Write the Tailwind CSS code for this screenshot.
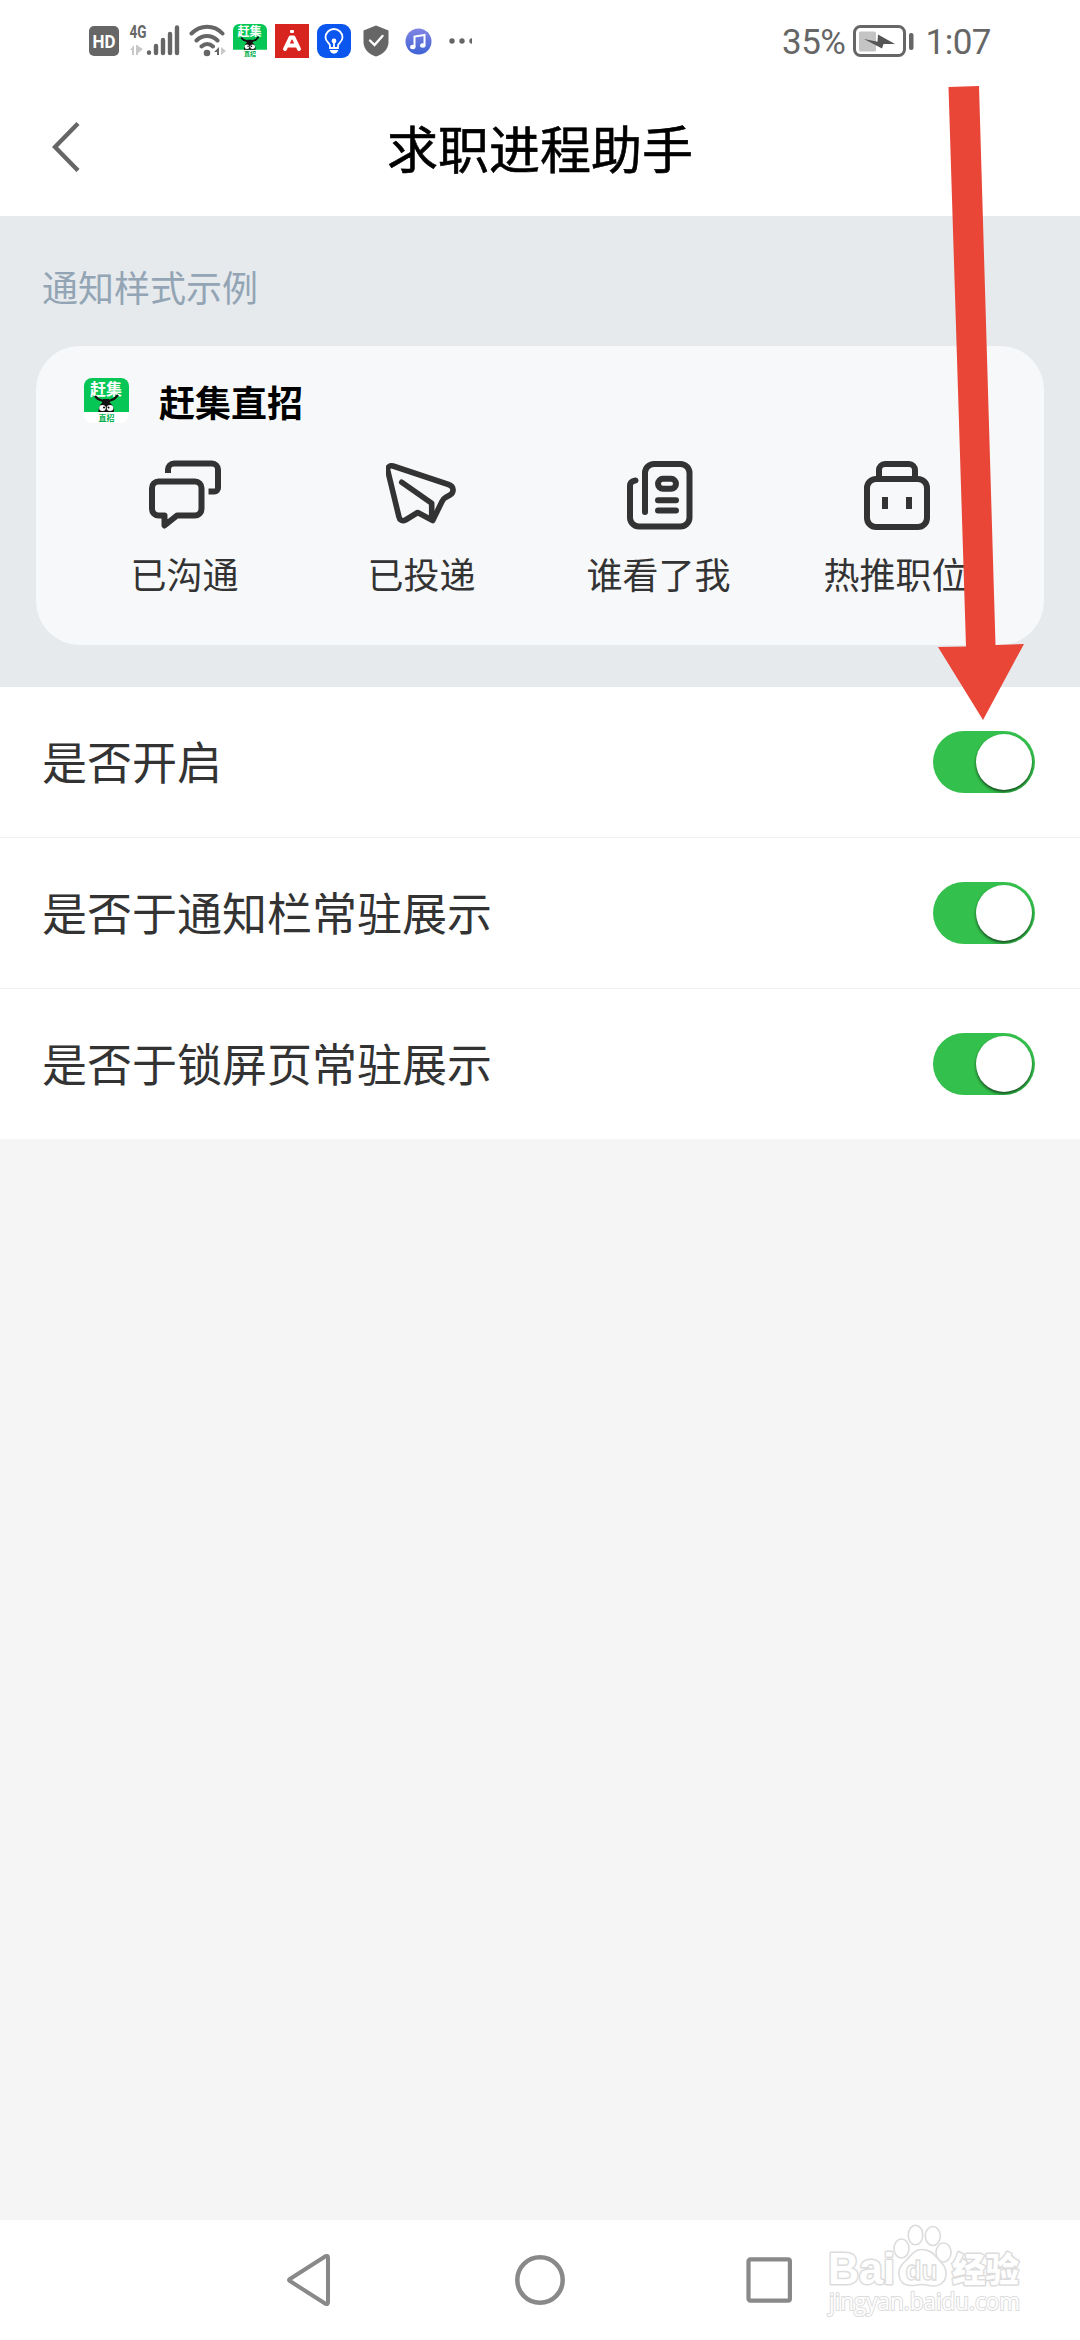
<!DOCTYPE html>
<html lang="zh-CN">
<head>
  <meta charset="UTF-8" />
  <meta name="viewport" content="width=device-width, initial-scale=1.0" />
  <title>求职进程助手</title>
  <script src="https://cdn.jsdelivr.net/npm/@tailwindcss/browser@4"></script>
</head>
<body class="bg-[#f5f5f5] font-['Noto_Sans_CJK_SC',sans-serif]">
  <div class="relative flex flex-col w-[1080px] h-[2340px] overflow-hidden">

    <!-- Status bar -->
    <div class="flex items-center justify-between h-[82px] bg-white pl-[89px] pr-[89px] text-[#666]">
      <div class="flex items-center">
        <svg class="w-[30px] h-[30px]" viewBox="0 0 30 30">
          <rect width="30" height="30" rx="5" fill="#666" />
          <text x="3.5" y="22" font-family="Roboto" font-weight="700" font-size="19" textLength="23" lengthAdjust="spacingAndGlyphs" fill="#fff">HD</text>
        </svg>
        <svg class="w-[51px] h-[34px] ml-[10px] overflow-visible" viewBox="0 0 51 34">
          <text x="0.5" y="14" font-family="Roboto" font-weight="700" font-size="18" textLength="17" lengthAdjust="spacingAndGlyphs" fill="#666">4G</text>
          <path d="M5 21v10H3v-5H1zM7 21v10h2v-2l5-4-5-3v-1z" fill="#c8c8c8" />
          <path d="M20 28.5v.2M27 22v7M34 16v13M41 10v19M48 3.500v25.500" stroke="#666" stroke-width="4.400" stroke-linecap="round" />
        </svg>
        <svg class="w-[38px] h-[34px] ml-[9px]" viewBox="0 0 38 34" fill="none" stroke="#666" stroke-width="4" stroke-linecap="round">
          <path d="M2.500 9.500C11.500 .500 25 .500 33.500 9.500M7.500 16.500c6-6 15-6 21 0M12.500 22.500c3.500-3.200 8-3.200 11.500 0" />
          <circle cx="18" cy="29" r="3.300" fill="#666" stroke="none" />
          <path d="M30 23v8h-2v-3h-3z" fill="#666" stroke="none" />
          <path d="M32 23v8l5-4z" fill="#c8c8c8" stroke="none" />
        </svg>
        <svg class="w-[34px] h-[34px] ml-[6px] overflow-visible" viewBox="0 0 45 45">
          <rect width="45" height="45" rx="8" fill="#fff" />
          <path d="M0 34V8a8 8 0 0 1 8-8h29a8 8 0 0 1 8 8v26z" fill="#06c755" />
          <text x="6" y="16.500" font-size="16" font-weight="700" fill="#fff">赶集</text>
          <path d="M11 18l3 3 8 3M34 17l-4 4-8 3" fill="none" stroke="#111" stroke-width="2.400" />
          <path d="M14.500 34c0-5 2-8 3.500-9l1-4h6l1 4c2 1 4 4 4 9z" fill="#111" />
          <ellipse cx="18.500" cy="30" rx="3.300" ry="3" fill="#fff" /><ellipse cx="26" cy="30" rx="3.300" ry="3" fill="#fff" />
          <circle cx="20" cy="29.500" r="1" /><circle cx="24.500" cy="29.500" r="1" />
          <text x="14.500" y="42.500" font-size="8" font-weight="700" fill="#06b050">直招</text>
        </svg>
        <svg class="w-[34px] h-[34px] ml-[8px]" viewBox="0 0 34 34">
          <rect width="34" height="34" fill="#d8241f" />
          <path d="M10 25L15.500 13.500h3L24 25M13 21.500h8" fill="none" stroke="#fff" stroke-width="4" stroke-linecap="round" stroke-linejoin="round" />
          <rect x="15" y="6" width="4" height="3" rx="1" fill="#fff" />
        </svg>
        <svg class="w-[34px] h-[34px] ml-[8px]" viewBox="0 0 34 34" fill="none" stroke="#fff" stroke-width="1.800" stroke-linecap="round">
          <rect width="34" height="34" rx="9" fill="#0a56ee" stroke="none" />
          <path d="M13 24v-2.500c0-2-4.500-4-4.500-8a8.500 8.500 0 0 1 17 0c0 4-4.500 6-4.500 8V24zM17 18v5.500M14 27c1 2.500 5 2.500 6 0z" />
          <circle cx="17" cy="17" r="1.500" fill="#fff" />
        </svg>
        <svg class="w-[26px] h-[32px] ml-[12px]" viewBox="0 0 26 32">
          <path d="M13 .500l12.500 5V17c0 7-5 12-12.500 14.500C5.500 29 .500 24 .500 17V5.500z" fill="#666" />
          <path d="M7 15.500l4.500 4.500 8-9" fill="none" stroke="#fff" stroke-width="2.400" stroke-linecap="round" />
        </svg>
        <svg class="w-[27px] h-[27px] ml-[16px]" viewBox="0 0 27 27">
          <defs>
            <linearGradient id="music" x1="0" y1="0" x2="0" y2="1">
              <stop offset="0" stop-color="#8184e2" />
              <stop offset="1" stop-color="#3f63d6" />
            </linearGradient>
          </defs>
          <circle cx="13.500" cy="13.500" r="13" fill="url(#music)" />
          <path d="M9.500 19V8.500L19.500 7v10.500" fill="none" stroke="#fff" stroke-width="2" />
          <ellipse cx="7.800" cy="19" rx="2.700" ry="2.200" fill="#fff" /><ellipse cx="17.800" cy="17.500" rx="2.700" ry="2.200" fill="#fff" />
        </svg>
        <svg class="w-[23px] h-[6px] ml-[17px]" viewBox="0 0 23 6" fill="#666">
          <circle cx="3" cy="3" r="2.700" /><circle cx="13" cy="3" r="2.700" /><circle cx="23" cy="3" r="2.700" />
        </svg>
      </div>
      <div class="flex items-center font-[Roboto] text-[35px] leading-none">
        <span class="tracking-[-0.5px] pt-[2px]">35%</span>
        <svg class="w-[62px] h-[32px] ml-[6px]" viewBox="0 0 62 32">
          <rect x="2.500" y="1.500" width="50" height="29" rx="6" fill="none" stroke="#666" stroke-width="3" />
          <rect x="7" y="6.500" width="17" height="20" rx="1.500" fill="#c4c4c4" />
          <rect x="57" y="8" width="4.500" height="17" rx="2" fill="#666" />
          <path d="M12 14l13.500 2.700.5-7.200 17 9.500H31.500L30 23.500z" fill="#555" />
        </svg>
        <span class="ml-[12px] tracking-[-0.5px] pt-[2px]">1:07</span>
      </div>
    </div>

    <!-- Title bar -->
    <header class="grid grid-cols-[120px_1fr_120px] items-center h-[134px] bg-white">
      <svg class="w-[28px] h-[50px] ml-[52px] mb-[4px]" viewBox="0 0 28 50">
        <path d="M26 1.500L3 25l23 23.500" fill="none" stroke="#666" stroke-width="4.400" />
      </svg>
      <h1 class="pb-1 text-center text-[51px] leading-none text-black [-webkit-text-stroke:0.6px_#000]">求职进程助手</h1>
    </header>

    <!-- Notification preview -->
    <section class="h-[471px] bg-[#e6eaed] px-9 pt-[52px]">
      <p class="pl-[6px] text-[36px] leading-[36px] text-[#93a5b5]">通知样式示例</p>
      <div class="h-[299px] mt-[42px] rounded-[44px] bg-[#f7f8fa] pt-8 px-[30px]">
        <div class="flex items-center gap-[30px] h-[45px] pl-[18px]">
          <svg class="w-[45px] h-[45px] overflow-visible" viewBox="0 0 45 45">
            <rect width="45" height="45" rx="8" fill="#fff" />
            <path d="M0 34V8a8 8 0 0 1 8-8h29a8 8 0 0 1 8 8v26z" fill="#06c755" />
            <text x="6" y="16.500" font-size="16" font-weight="700" fill="#fff">赶集</text>
            <path d="M11 18l3 3 8 3M34 17l-4 4-8 3" fill="none" stroke="#111" stroke-width="2.400" />
            <path d="M14.500 34c0-5 2-8 3.500-9l1-4h6l1 4c2 1 4 4 4 9z" fill="#111" />
            <ellipse cx="18.500" cy="30" rx="3.300" ry="3" fill="#fff" /><ellipse cx="26" cy="30" rx="3.300" ry="3" fill="#fff" />
            <circle cx="20" cy="29.500" r="1" /><circle cx="24.500" cy="29.500" r="1" />
            <text x="14.500" y="42.500" font-size="8" font-weight="700" fill="#06b050">直招</text>
          </svg>
          <span class="text-[36px] leading-none font-bold text-black">赶集直招</span>
        </div>
        <div class="grid grid-cols-4 mt-9 text-[36px] leading-none text-[#333]">
          <div class="flex flex-col items-center gap-6">
            <svg class="w-[72px] h-[72px]" viewBox="0 0 72 72" fill="none" stroke="#333" stroke-width="6" stroke-linejoin="round">
              <path d="M9.500 22.500H46a6.500 6.500 0 0 1 6.500 6.500V50a6.500 6.500 0 0 1-6.500 6.500H28L15.500 66.500v-10h-6A6.500 6.500 0 0 1 3 50V29a6.500 6.500 0 0 1 6.500-6.500z" />
              <path d="M19 14v-3.500a6 6 0 0 1 6-6H63a6 6 0 0 1 6 6V29a3.500 3.500 0 0 1-3.500 3.500H59.500" />
            </svg>
            <span>已沟通</span>
          </div>
          <div class="flex flex-col items-center gap-6">
            <svg class="w-[72px] h-[72px]" viewBox="0 0 72 72" fill="none" stroke="#333" stroke-width="5.600" stroke-linejoin="round" stroke-linecap="round">
              <path d="M1.700 11.500C1.200 8 4 6 7 7l55.500 18.500c5.500 2 6 7.500 1.500 10.500l-4.500 2.500c-2 1-2.500 2-3.500 4L46.700 61.500 31.700 53.500 19.500 61c-3 1.500-6 0-6.500-3z" />
              <path d="M15.700 23.300L45.700 44.300V59" />
            </svg>
            <span>已投递</span>
          </div>
          <div class="flex flex-col items-center gap-6">
            <svg class="w-[72px] h-[72px]" viewBox="0 0 72 72" fill="none" stroke="#333" stroke-width="6" stroke-linecap="round">
              <path d="M22 53V14a9 9 0 0 1 9-9h26.500a9 9 0 0 1 9 9v44.500a9 9 0 0 1-9 9H16a9 9 0 0 1-9-9V27c0-3 2-5 5.500-5.500" />
              <rect x="35" y="19.800" width="18" height="10" rx="5" />
              <path d="M35 41.300h18M35 51.500h18" />
            </svg>
            <span>谁看了我</span>
          </div>
          <div class="flex flex-col items-center gap-6">
            <svg class="w-[72px] h-[72px]" viewBox="0 0 72 72" fill="none" stroke="#333" stroke-width="6">
              <rect x="7" y="20" width="60" height="48" rx="9" />
              <path d="M19 20v-9a6 6 0 0 1 6-6h24a6 6 0 0 1 6 6v9M25 38v12M49 38v12" />
            </svg>
            <span>热推职位</span>
          </div>
        </div>
      </div>
    </section>

    <!-- Settings -->
    <ul class="bg-white text-[45px] leading-none text-[#333] divide-y divide-[#f1f1f1]">
      <li class="flex items-center justify-between box-content h-[150px] pl-[42px] pr-[45px]">
        <span class="pb-[3px]">是否开启</span>
        <span class="flex justify-end w-[102px] h-[62px] p-[3px] rounded-full bg-[#34c04c] overflow-hidden">
          <span class="size-14 rounded-full bg-white shadow-[0_2px_3px_rgba(0,0,0,0.6)]"></span>
        </span>
      </li>
      <li class="flex items-center justify-between box-content h-[150px] pl-[42px] pr-[45px]">
        <span class="pb-[3px]">是否于通知栏常驻展示</span>
        <span class="flex justify-end w-[102px] h-[62px] p-[3px] rounded-full bg-[#34c04c] overflow-hidden">
          <span class="size-14 rounded-full bg-white shadow-[0_2px_3px_rgba(0,0,0,0.6)]"></span>
        </span>
      </li>
      <li class="flex items-center justify-between box-content h-[150px] pl-[42px] pr-[45px]">
        <span class="pb-[3px]">是否于锁屏页常驻展示</span>
        <span class="flex justify-end w-[102px] h-[62px] p-[3px] rounded-full bg-[#34c04c] overflow-hidden">
          <span class="size-14 rounded-full bg-white shadow-[0_2px_3px_rgba(0,0,0,0.6)]"></span>
        </span>
      </li>
    </ul>

    <!-- System navigation -->
    <nav class="flex items-center justify-between h-[120px] mt-auto bg-white px-[286px]">
      <svg class="w-[48px] h-[54px]" viewBox="0 0 48 54" fill="none" stroke="#898989" stroke-width="4" stroke-linejoin="round">
        <path d="M3.500 26.200L39.500 3.200q2.500-1 2.500 1.500V49.300q0 2.500-2.500 1.500L3.500 27.800q-1-.8 0-1.600z" />
      </svg>
      <svg class="w-[50px] h-[50px]" viewBox="0 0 50 50" fill="none" stroke="#898989" stroke-width="4.500">
        <circle cx="25" cy="25" r="22.700" />
      </svg>
      <svg class="w-[48px] h-[46px]" viewBox="0 0 48 46" fill="none" stroke="#898989" stroke-width="4.200">
        <rect x="2.500" y="2.300" width="41.400" height="41.400" rx="2" />
      </svg>
    </nav>

    <!-- Pointer arrow over the first switch -->
    <svg class="absolute left-[930px] top-[80px] w-[100px] h-[645px]" viewBox="930 80 100 645">
      <path d="M948.500 87L979 86 995.500 645 1024 644 983 720 938 647 966 646.500z" fill="#e94638" />
    </svg>

    <!-- Watermark -->
    <svg class="absolute left-[820px] top-[2220px] w-[210px] h-[105px]" viewBox="820 2220 210 105" fill="#fff" stroke="#dcdcdc" stroke-width="2">
      <g font-family="Liberation Sans, Noto Sans CJK SC, sans-serif" font-weight="700" paint-order="stroke" stroke-width="3" stroke-linejoin="round">
        <text x="828" y="2284" font-size="44" textLength="67" lengthAdjust="spacingAndGlyphs">Bai</text>
        <text x="952" y="2282" font-size="34" font-weight="900" textLength="67" lengthAdjust="spacingAndGlyphs">经验</text>
      </g>
      <g stroke-width="1.600">
        <ellipse cx="901.500" cy="2248.500" rx="7.500" ry="9.500" />
        <ellipse cx="915.500" cy="2235" rx="7.300" ry="9.800" />
        <ellipse cx="932.800" cy="2236" rx="7.500" ry="9.500" />
        <ellipse cx="943.500" cy="2252.500" rx="7.500" ry="9.500" />
        <path d="M922 2249.500c-8 0-11 6-16 11-6 5-8 9-7 15 1 7 6 10 12 10 5 0 7-1 11-1s7 1.500 12 1.500c6 0 11-4 12-10 1-7-2-11-7-16-5-6-9-10.500-17-10.500z" />
        <text x="905.500" y="2280" font-family="Liberation Sans" font-weight="700" font-size="28" stroke-width="1.300" textLength="32" lengthAdjust="spacingAndGlyphs">du</text>
      </g>
      <text x="829" y="2310" font-family="Open Sans" font-size="23" paint-order="stroke" textLength="191" lengthAdjust="spacingAndGlyphs">jingyan.baidu.com</text>
    </svg>
  </div>
</body>
</html>
